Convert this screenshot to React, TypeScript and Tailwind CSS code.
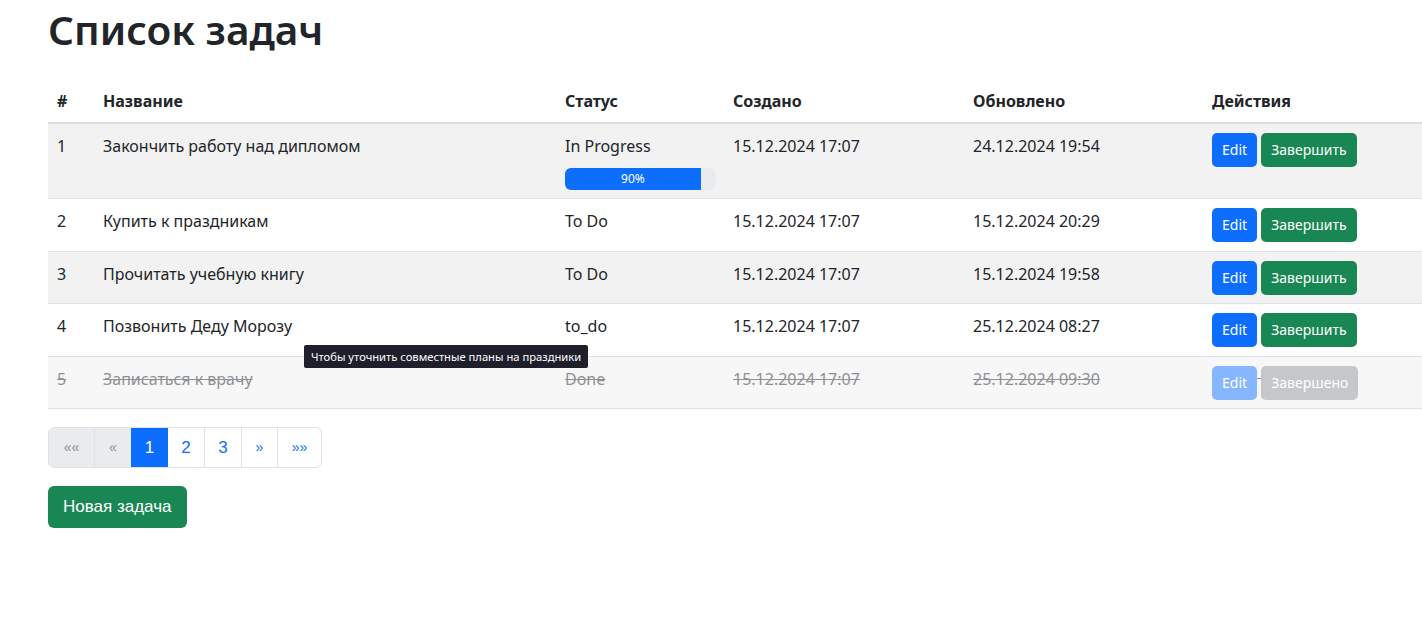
import React from "react";

interface Task {
  id: number;
  title: string;
  status: string;
  created: string;
  updated: string;
  progress?: number;
  done?: boolean;
}

const tasks: Task[] = [
  { id: 1, title: "Закончить работу над дипломом", status: "In Progress", created: "15.12.2024 17:07", updated: "24.12.2024 19:54", progress: 90 },
  { id: 2, title: "Купить к праздникам", status: "To Do", created: "15.12.2024 17:07", updated: "15.12.2024 20:29" },
  { id: 3, title: "Прочитать учебную книгу", status: "To Do", created: "15.12.2024 17:07", updated: "15.12.2024 19:58" },
  { id: 4, title: "Позвонить Деду Морозу", status: "to_do", created: "15.12.2024 17:07", updated: "25.12.2024 08:27" },
  { id: 5, title: "Записаться к врачу", status: "Done", created: "15.12.2024 17:07", updated: "25.12.2024 09:30", done: true },
];

const font = { fontFamily: '"Noto Sans", "Open Sans", sans-serif' };

function Actions({ done }: { done?: boolean }) {
  if (done) {
    return (
      <>
        <span className="inline-block h-[34px] rounded-[5px] bg-[#86b7fe] px-[10px] align-top text-[14px] leading-[34px] text-white">Edit</span>{" "}
        <span className="inline-block h-[34px] rounded-[5px] bg-[#c4c8cb] px-[10px] align-top text-[14px] leading-[34px] text-white">Завершено</span>
      </>
    );
  }
  return (
    <>
      <button className="inline-block h-[34px] rounded-[5px] bg-[#0d6efd] px-[10px] align-top text-[14px] leading-[34px] text-white">Edit</button>{" "}
      <button className="inline-block h-[34px] rounded-[5px] bg-[#198754] px-[10px] align-top text-[14px] leading-[34px] text-white">Завершить</button>
    </>
  );
}

export default function App() {
  return (
    <div className="min-h-[644px] bg-white pl-[48px] text-[#212529]" style={font}>
      <h1 className="pt-[2px] pb-[22px] text-[40.5px] font-semibold leading-[56px] text-[#212529]">Список задач</h1>

      <table className="w-[1374px] table-fixed border-collapse text-left text-[16px] leading-[24px]">
        <colgroup>
          <col className="w-[47px]" />
          <col className="w-[462px]" />
          <col className="w-[168px]" />
          <col className="w-[240px]" />
          <col className="w-[239px]" />
          <col />
        </colgroup>
        <thead>
          <tr className="border-b-2 border-[#dcdcdc]">
            <th className="px-[9px] py-[9px] font-bold">#</th>
            <th className="px-[8px] py-[9px] font-bold">Название</th>
            <th className="px-[8px] py-[9px] font-bold">Статус</th>
            <th className="px-[8px] py-[9px] font-bold">Создано</th>
            <th className="px-[8px] py-[9px] font-bold">Обновлено</th>
            <th className="px-[8px] py-[9px] font-bold">Действия</th>
          </tr>
        </thead>
        <tbody>
          {tasks.map((t) => {
            const rowBg = t.done ? "bg-[#f7f7f7]" : t.id % 2 === 1 ? "bg-[#f2f2f2]" : "bg-white";
            const textCls = t.done ? "text-[#8e9194] line-through" : "";
            return (
              <tr key={t.id} className={`border-b border-[#dee2e6] align-top ${rowBg} ${textCls}`}>
                <td className="px-[9px] pt-[10px] pb-[8px]">{t.id}</td>
                <td className="relative px-[8px] pt-[10px] pb-[8px]">
                  {t.title}
                  {t.id === 4 && (
                    <div className="absolute left-[209px] top-[41px] z-10 whitespace-nowrap rounded-[2px] bg-[#1e1f2b] px-[7px] py-[2px] text-[11.2px] leading-[19px] text-white">
                      Чтобы уточнить совместные планы на праздники
                    </div>
                  )}
                </td>
                <td className="px-[8px] pt-[10px] pb-[8px]">
                  {t.status}
                  {t.progress !== undefined && (
                    <div className="mt-[10px] flex h-[22px] w-[151px] overflow-hidden rounded-[6px] bg-[#e9ecef]">
                      <div
                        className="flex items-center justify-center bg-[#0d6efd] text-[12px] text-white"
                        style={{ width: `${t.progress}%` }}
                      >
                        {t.progress}%
                      </div>
                    </div>
                  )}
                </td>
                <td className="px-[8px] pt-[10px] pb-[8px]">{t.created}</td>
                <td className="px-[8px] pt-[10px] pb-[8px]">{t.updated}</td>
                <td className="whitespace-nowrap px-[8px] pt-[9px] pb-[8.5px]">
                  <Actions done={t.done} />
                </td>
              </tr>
            );
          })}
        </tbody>
      </table>

      <div className="mt-[18px] flex" style={{ fontFamily: '"Liberation Sans", Arial, sans-serif' }}>
        <div className="flex h-[41px] overflow-hidden rounded-[6px] border border-[#dee2e6] text-[16px]">
          <span className="flex w-[46px] items-center justify-center border-r border-[#dee2e6] bg-[#e9ecef] text-[14px] text-[#8a8f94]">««</span>
          <span className="flex w-[36px] items-center justify-center bg-[#e9ecef] text-[14px] text-[#8a8f94]">«</span>
          <span className="flex w-[37px] items-center justify-center bg-[#0d6efd] text-[17px] text-white">1</span>
          <span className="flex w-[37px] items-center justify-center border-r border-[#dee2e6] text-[17px] text-[#0d6efd]">2</span>
          <span className="flex w-[37px] items-center justify-center border-r border-[#dee2e6] text-[17px] text-[#0d6efd]">3</span>
          <span className="flex w-[36px] items-center justify-center border-r border-[#dee2e6] text-[14px] text-[#0d6efd]">»</span>
          <span className="flex w-[43px] items-center justify-center text-[14px] text-[#0d6efd]">»»</span>
        </div>
      </div>

      <button
        className="mt-[18px] h-[42px] rounded-[6px] bg-[#198754] px-[15px] text-[17px] text-white"
        style={{ fontFamily: '"Liberation Sans", Arial, sans-serif' }}
      >
        Новая задача
      </button>
    </div>
  );
}
